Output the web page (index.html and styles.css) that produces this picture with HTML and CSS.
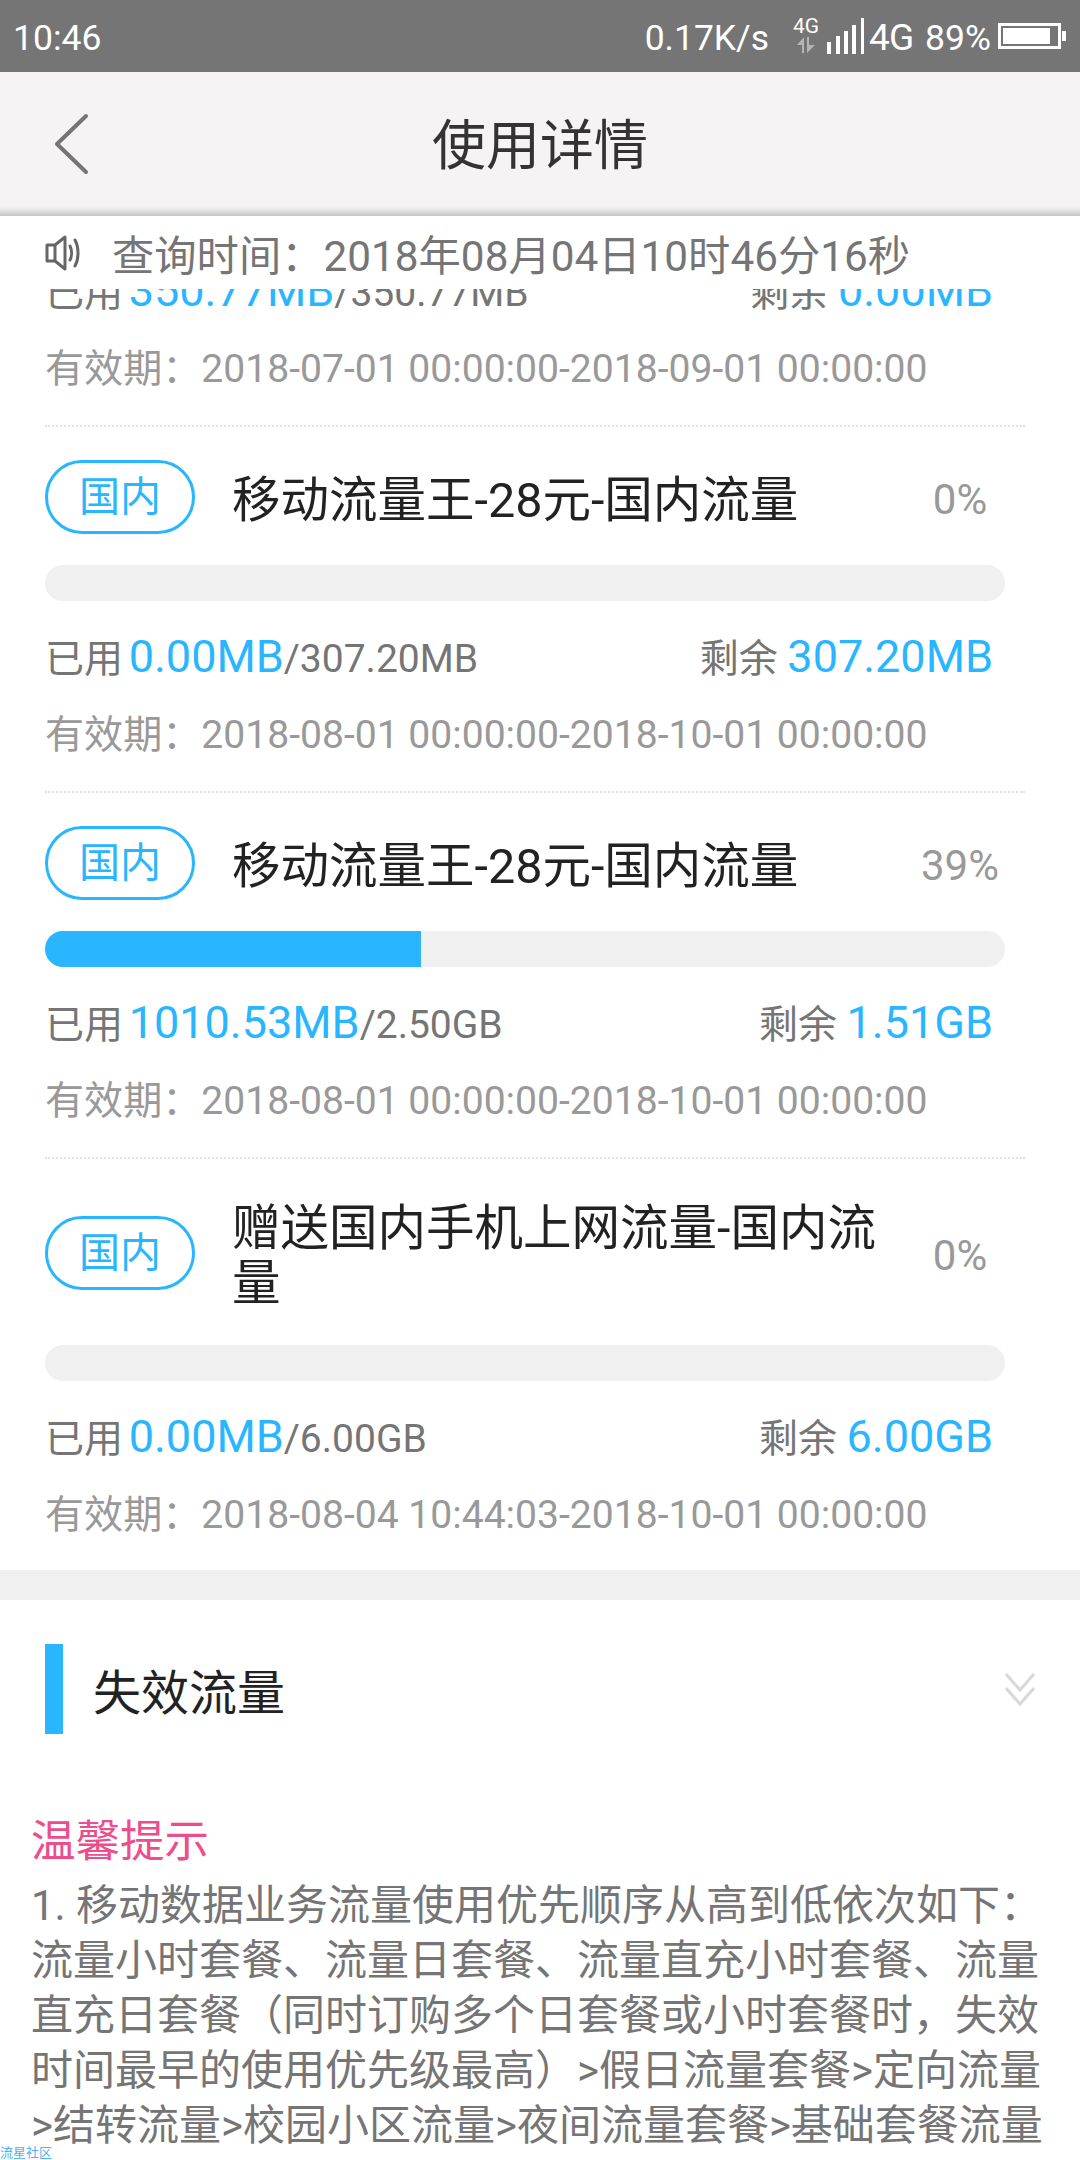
FILE: index.html
```html
<!DOCTYPE html>
<html lang="zh-CN">
<head>
  <meta charset="UTF-8" />
  <title>使用详情</title>
  <link rel="stylesheet" href="styles.css">
</head>
<body>
  <div class="status-bar">
    <span class="status-time">10:46</span>
    <div class="status-right">
      <span class="status-speed">0.17K/s</span>
      <div class="status-net">
        <span class="net-label">4G</span>
        <svg width="20" height="16" viewBox="0 0 20 16"><path d="M8 0v16H6V8H1zM11 0h2v8h6l-8 8z" fill="#b5b5b5"/></svg>
      </div>
      <svg class="status-signal" width="38" height="36" viewBox="0 0 38 36"><path d="M0 24h4v12H0zM9 18h4v18H9zM17 13h4v23h-4zM25 7h4v29h-4zM34 0h3v36h-3z" fill="#fff"/></svg>
      <span class="status-4g">4G</span>
      <span class="status-pct">89%</span>
      <svg class="status-battery" width="68" height="26" viewBox="0 0 68 26"><rect x="1.5" y="1.5" width="60" height="23" fill="none" stroke="#fff" stroke-width="3"/><rect x="5" y="5" width="47" height="16" fill="#fff"/><rect x="64" y="8" width="4" height="10" fill="#fff"/></svg>
    </div>
  </div>

  <div class="nav-bar">
    <svg class="nav-back" width="36" height="62" viewBox="0 0 36 62"><path d="M33 3 4 31l29 28" fill="none" stroke="#757575" stroke-width="4" stroke-linecap="round" stroke-linejoin="round"/></svg>
    <h1 class="nav-title">使用详情</h1>
  </div>

  <div class="notice">
    <svg class="notice-icon" width="38" height="36" viewBox="0 0 38 36"><path d="M2 10h8l10-8v32l-10-8H2zM10 10v16M25 11c2 4 2 10 0 14M30 5c4 7 4 19 0 26" fill="none" stroke="#666" stroke-width="3" stroke-linejoin="round" stroke-linecap="round"/></svg>
    <span>查询时间：2018年08月04日10时46分16秒</span>
  </div>

  <div class="list">
    <div class="card card-scrolled">
      <div class="card-head">
        <span class="pill">国内</span>
        <div class="card-title">移动流量王-28元-国内流量</div>
        <div class="card-pct">100%</div>
      </div>
      <div class="bar"><div class="bar-fill" style="width: 100%"></div></div>
      <div class="usage">
        <div class="usage-used">已用 <b>350.77MB</b>/350.77MB</div>
        <div>剩余 <b>0.00MB</b></div>
      </div>
      <div class="valid">有效期：2018-07-01 00:00:00-2018-09-01 00:00:00</div>
    </div>

    <div class="card">
      <div class="card-head">
        <span class="pill">国内</span>
        <div class="card-title">移动流量王-28元-国内流量</div>
        <div class="card-pct">0%</div>
      </div>
      <div class="bar"></div>
      <div class="usage">
        <div class="usage-used">已用 <b>0.00MB</b>/307.20MB</div>
        <div>剩余 <b>307.20MB</b></div>
      </div>
      <div class="valid">有效期：2018-08-01 00:00:00-2018-10-01 00:00:00</div>
    </div>

    <div class="card">
      <div class="card-head">
        <span class="pill">国内</span>
        <div class="card-title">移动流量王-28元-国内流量</div>
        <div class="card-pct">39%</div>
      </div>
      <div class="bar"><div class="bar-fill" style="width: 39.2%"></div></div>
      <div class="usage">
        <div class="usage-used">已用 <b>1010.53MB</b>/2.50GB</div>
        <div>剩余 <b>1.51GB</b></div>
      </div>
      <div class="valid">有效期：2018-08-01 00:00:00-2018-10-01 00:00:00</div>
    </div>

    <div class="card card-last">
      <div class="card-head">
        <span class="pill">国内</span>
        <div class="card-title">赠送国内手机上网流量-国内流量</div>
        <div class="card-pct">0%</div>
      </div>
      <div class="bar"></div>
      <div class="usage">
        <div class="usage-used">已用 <b>0.00MB</b>/6.00GB</div>
        <div>剩余 <b>6.00GB</b></div>
      </div>
      <div class="valid">有效期：2018-08-04 10:44:03-2018-10-01 00:00:00</div>
    </div>
  </div>

  <div class="section-gap"></div>

  <div class="section-head">
    <h2 class="section-title">失效流量</h2>
    <svg class="section-arrow" width="32" height="34" viewBox="0 0 32 34"><path d="M2 2l14 16L30 2M2 16l14 16 14-16" fill="none" stroke="#d8d8d8" stroke-width="3"/></svg>
  </div>

  <div class="tips">
    <h3 class="tips-title">温馨提示</h3>
    <p class="tips-text">1. 移动数据业务流量使用优先顺序从高到低依次如下：流量小时套餐、流量日套餐、流量直充小时套餐、流量直充日套餐（同时订购多个日套餐或小时套餐时，失效时间最早的使用优先级最高）&gt;假日流量套餐&gt;定向流量&gt;结转流量&gt;校园小区流量&gt;夜间流量套餐&gt;基础套餐流量</p>
  </div>

  <div class="watermark">流星社区</div>
</body>
</html>
```

FILE: styles.css
```css
html, body {
  margin: 0;
  padding: 0;
}

body {
  position: relative;
  height: 2160px;
  overflow: hidden;
  background: white;
  font-family: Roboto, "Noto Sans CJK SC", sans-serif;
  color: #757575;
}

/* Status bar */
.status-bar {
  height: 72px;
  display: flex;
  justify-content: space-between;
  align-items: center;
  padding: 3px 14px 0 13px;
  box-sizing: border-box;
  background: #757575;
  color: white;
  font-size: 35.5px;
}
.status-right {
  display: flex;
  align-items: center;
}
.status-speed {
  margin-right: 24px;
}
.status-net {
  display: flex;
  flex-direction: column;
  align-items: center;
  width: 26px;
  margin: -8px 8px 0 0;
}
.net-label {
  font-size: 21px;
  line-height: 22px;
}
.status-signal {
  margin: -3px 4px 0 0;
}
.status-4g {
  font-size: 37px;
  letter-spacing: -1px;
  margin-right: 12px;
}
.status-pct {
  margin-right: 7px;
}
.status-battery {
  margin-top: -3px;
}

/* Nav */
.nav-bar {
  position: relative;
  height: 144px;
  display: flex;
  align-items: center;
  justify-content: center;
  padding-bottom: 5px;
  box-sizing: border-box;
  background: linear-gradient(#f5f3f4 135px, #c6c6c6 144px);
}
.nav-back {
  position: absolute;
  left: 53px;
  top: 41px;
}
.nav-title {
  margin: 0;
  font-size: 54px;
  font-weight: normal;
  color: #333;
}

/* Notice */
.notice {
  height: 73px;
  display: flex;
  align-items: center;
  padding: 0 0 0 45px;
  font-size: 42.3px;
  background: white;
}
.notice-icon {
  margin-right: 29px;
}

/* Package list */
.list {
  overflow: hidden;
  margin: 0 55px 0 45px;
}
.card {
  padding: 33px 0 31px;
  border-bottom: 2px dotted #e0e0e0;
}
.card-scrolled {
  margin-top: -228px;
}
.card-last {
  padding-bottom: 30px;
  border-bottom: none;
}
.card-head {
  display: flex;
  align-items: center;
  width: 993px;
  margin-bottom: 31px;
}
.pill {
  flex: none;
  width: 150px;
  height: 74px;
  line-height: 69px;
  box-sizing: border-box;
  border: 3px solid #29b6ff;
  border-radius: 37px;
  text-align: center;
  font-size: 41px;
  color: #29b6ff;
}
.card-title {
  width: 650px;
  margin-left: 37px;
  padding: 9px 0 3px;
  font-size: 48.5px;
  line-height: 55px;
  color: #222;
}
.card-pct {
  flex: 1;
  padding-top: 4px;
  text-align: center;
  font-size: 42px;
  color: #999;
}
.bar {
  width: 960px;
  height: 36px;
  border-radius: 18px;
  overflow: hidden;
  background: #f0f0f0;
}
.bar-fill {
  height: 100%;
  background: #29b6ff;
}
.usage {
  display: flex;
  justify-content: space-between;
  height: 60px;
  line-height: 60px;
  margin-top: 26px;
  padding: 0 32px 0 0;
  font-size: 39px;
}
.usage-used {
  word-spacing: -4px;
}
.usage b {
  font-weight: normal;
  font-size: 45px;
  color: #29b6ff;
}
.valid {
  height: 50px;
  line-height: 50px;
  margin-top: 23px;
  font-size: 39.1px;
  color: #999;
}

.section-gap {
  height: 30px;
  background: #f0f0f0;
}

/* 失效流量 */
.section-head {
  display: flex;
  align-items: center;
  justify-content: space-between;
  height: 90px;
  margin: 44px 44px 0 45px;
  padding-left: 30px;
  border-left: 18px solid #29b6ff;
}
.section-title {
  margin: 0;
  font-size: 48px;
  font-weight: normal;
  color: #222;
}

/* Tips */
.tips {
  margin-top: 76px;
  padding: 0 30px 0 31px;
}
.tips-title {
  margin: 0 0 3px;
  font-size: 44.5px;
  line-height: 65px;
  font-weight: normal;
  color: #ee4d8b;
}
.tips-text {
  margin: 0;
  font-size: 42px;
  line-height: 55px;
}

.watermark {
  position: absolute;
  left: 0;
  bottom: 0;
  font-size: 13px;
  line-height: 15px;
  color: #4fb0f5;
}
```
